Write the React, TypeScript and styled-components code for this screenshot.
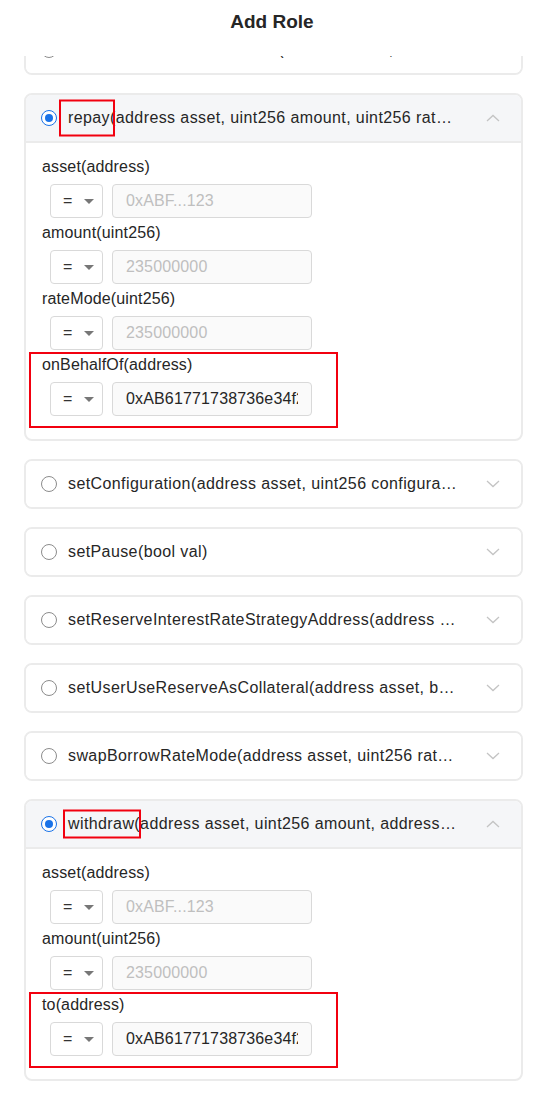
import React, { useLayoutEffect, useRef } from "react";
import styled, { createGlobalStyle } from "styled-components";

const GlobalStyle = createGlobalStyle`
  html, body {
    margin: 0;
    padding: 0;
    background: #fff;
  }
  body {
    font-family: "Liberation Sans", Arial, Helvetica, sans-serif;
    color: #333;
  }
`;

type Param = { label: string; value?: string; placeholder?: string; marked?: boolean };
type Fn = {
  name: string;
  args: string;
  checked?: boolean;
  params?: Param[];
  mark?: { left: number; right: number; height: number };
};

const fns: Fn[] = [
  { name: "rebalanceStableBorrowRate", args: "address asset, address user)" },
  {
    name: "repay",
    args: "address asset, uint256 amount, uint256 rateMode, address onBehalfOf)",
    checked: true,
    mark: { left: 9, right: -5, height: 37 },
    params: [
      { label: "asset(address)", placeholder: "0xABF...123" },
      { label: "amount(uint256)", placeholder: "235000000" },
      { label: "rateMode(uint256)", placeholder: "235000000" },
      { label: "onBehalfOf(address)", value: "0xAB61771738736e34f23a", marked: true },
    ],
  },
  { name: "setConfiguration", args: "address asset, uint256 configuration)" },
  { name: "setPause", args: "bool val)" },
  { name: "setReserveInterestRateStrategyAddress", args: "address asset, address rateStrategyAddress)" },
  { name: "setUserUseReserveAsCollateral", args: "address asset, bool useAsCollateral)" },
  { name: "swapBorrowRateMode", args: "address asset, uint256 rateMode)" },
  {
    name: "withdraw",
    args: "address asset, uint256 amount, address to)",
    checked: true,
    mark: { left: 5, right: -7, height: 29 },
    params: [
      { label: "asset(address)", placeholder: "0xABF...123" },
      { label: "amount(uint256)", placeholder: "235000000" },
      { label: "to(address)", value: "0xAB61771738736e34f23a", marked: true },
    ],
  },
];

function App() {
  const scrollRef = useRef<HTMLDivElement>(null);

  // the list is scrolled so that only the bottom edge of the first card shows
  useLayoutEffect(() => {
    if (scrollRef.current) scrollRef.current.scrollTop = 47;
  }, []);

  return (
    <Page>
      <GlobalStyle />
      <Title>Add Role</Title>
      <Scroll ref={scrollRef}>
        <List>
          {fns.map((fn) => (
            <Card key={fn.name}>
              <Header $open={!!fn.params}>
                <Radio $checked={!!fn.checked} />
                <FnText>
                  {fn.mark ? (
                    <Mark $left={fn.mark.left} $right={fn.mark.right} $h={fn.mark.height}>
                      {fn.name}
                    </Mark>
                  ) : (
                    fn.name
                  )}
                  ({fn.args}
                </FnText>
                <Chevron width="14" height="8" viewBox="0 0 14 8">
                  <path
                    d={fn.params ? "M1 7 L7 1.5 L13 7" : "M1 1 L7 6.5 L13 1"}
                    fill="none"
                    stroke="#c4c4c4"
                    strokeWidth="1.3"
                  />
                </Chevron>
              </Header>
              {fn.params && (
                <Body>
                  {fn.params.map((p) => (
                    <Field key={p.label} $marked={!!p.marked}>
                      <FieldLabel>{p.label}</FieldLabel>
                      <FieldRow>
                        <Select>
                          <span>=</span>
                          <Caret />
                        </Select>
                        <Input readOnly placeholder={p.placeholder} value={p.value ?? ""} />
                      </FieldRow>
                    </Field>
                  ))}
                </Body>
              )}
            </Card>
          ))}
        </List>
      </Scroll>
    </Page>
  );
}

const Page = styled.div`
  width: 544px;
  height: 1094px;
  display: flex;
  flex-direction: column;
  overflow: hidden;
`;

const Title = styled.div`
  height: 56px;
  flex: none;
  display: flex;
  justify-content: center;
  padding-top: 10px;
  box-sizing: border-box;
  font: 700 19px "Liberation Sans", Arial, sans-serif;
  color: #262626;
  line-height: 24px;
`;

const Scroll = styled.div`
  flex: 1;
  min-height: 0;
  overflow: hidden;
`;

const List = styled.div`
  display: flex;
  flex-direction: column;
  gap: 18px;
  padding: 16px 21px 40px 24px;
`;

const Card = styled.div`
  border: 2px solid #ebebeb;
  border-radius: 8px;
  background: #fff;
`;

const Header = styled.div<{ $open: boolean }>`
  height: 46px;
  display: flex;
  align-items: center;
  padding: 0 21px 0 15px;
  background: ${(p) => (p.$open ? "#f5f6f8" : "#fff")};
  border-bottom: ${(p) => (p.$open ? "2px solid #ebebeb" : "none")};
  border-radius: ${(p) => (p.$open ? "6px 6px 0 0" : "6px")};
`;

const Radio = styled.span<{ $checked: boolean }>`
  flex: none;
  width: 16px;
  height: 16px;
  box-sizing: border-box;
  border-radius: 50%;
  border: 1px solid ${(p) => (p.$checked ? "#1a73e8" : "#8c8c8c")};
  background: #fff;
  display: flex;
  align-items: center;
  justify-content: center;
  margin-right: 1px;
  &::after {
    content: "";
    display: ${(p) => (p.$checked ? "block" : "none")};
    width: 8px;
    height: 8px;
    border-radius: 50%;
    background: #1a73e8;
  }
`;

/* padding + negative margins keep the red annotation box inside the clip */
const FnText = styled.div`
  flex: 1;
  min-width: 0;
  font-size: 16px;
  letter-spacing: 0.4px;
  color: #262626;
  white-space: nowrap;
  overflow: hidden;
  text-overflow: ellipsis;
  line-height: 22px;
  padding: 10px 0 10px 10px;
  margin: -10px 26px -10px 0;
`;

const Mark = styled.span<{ $left: number; $right: number; $h: number }>`
  position: relative;
  &::after {
    content: "";
    position: absolute;
    left: ${(p) => -p.$left}px;
    right: ${(p) => p.$right}px;
    top: 50%;
    height: ${(p) => p.$h}px;
    transform: translateY(-50%);
    border: 2px solid #f2000f;
    box-sizing: border-box;
    pointer-events: none;
  }
`;

const Chevron = styled.svg`
  flex: none;
`;

const Body = styled.div`
  display: flex;
  flex-direction: column;
  gap: 4px;
  padding: 13px 16px 23px;
`;

const Field = styled.div<{ $marked: boolean }>`
  position: relative;
  display: flex;
  flex-direction: column;
  gap: 6px;
  &::after {
    content: "";
    display: ${(p) => (p.$marked ? "block" : "none")};
    position: absolute;
    left: -13px;
    top: -2px;
    width: 309px;
    bottom: -12px;
    border: 2px solid #f2000f;
    box-sizing: border-box;
    pointer-events: none;
  }
`;

const FieldLabel = styled.div`
  font-size: 16px;
  letter-spacing: 0.15px;
  line-height: 22px;
  color: #262626;
`;

const FieldRow = styled.div`
  display: flex;
  gap: 9px;
  padding-left: 8px;
`;

const Select = styled.div`
  width: 53px;
  height: 34px;
  box-sizing: border-box;
  border: 1px solid #d9d9d9;
  border-radius: 4px;
  background: #fff;
  display: flex;
  align-items: center;
  padding-left: 12px;
  gap: 12px;
  font-size: 16px;
  color: #333;
`;

const Caret = styled.span`
  width: 0;
  height: 0;
  border-left: 5px solid transparent;
  border-right: 5px solid transparent;
  border-top: 5px solid #777;
`;

const Input = styled.input`
  width: 200px;
  height: 34px;
  box-sizing: border-box;
  border: 1px solid #d9d9d9;
  border-radius: 4px;
  background: #fafafa;
  padding: 0 13px;
  font: 16px "Liberation Sans", Arial, sans-serif;
  letter-spacing: 0.15px;
  color: #262626;
  outline: none;
  &::placeholder {
    color: #bfbfbf;
  }
`;

export default App;
